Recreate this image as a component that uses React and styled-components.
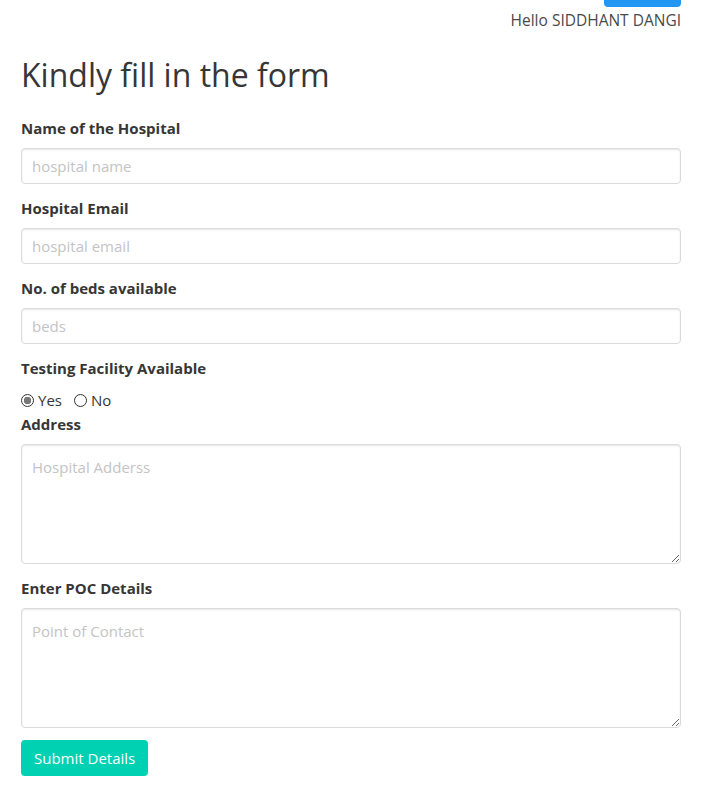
import React from 'react';
import styled, { createGlobalStyle } from 'styled-components';

const GlobalStyle = createGlobalStyle`
  body {
    margin: 0;
    background: #fff;
    font-family: 'Open Sans', 'Noto Sans', sans-serif;
    color: #4a4a4a;
  }
`;

const Page = styled.div`
  padding: 0 38px 0 21px;
`;

const Header = styled.header`
  display: flex;
  flex-direction: column;
  align-items: flex-end;
`;

const LogoutButton = styled.button`
  width: 77px;
  height: 36px;
  margin-top: -29px;
  border: none;
  border-radius: 4px;
  background: #2196f3;
  color: #fff;
`;

const Greeting = styled.div`
  margin-top: 3px;
  font-size: 15.5px;
  line-height: 20px;
  color: #4a4a4a;
`;

const Title = styled.h1`
  margin: 25px 0 21px;
  font-size: 32px;
  line-height: 40px;
  font-weight: 500;
  color: #363636;
`;

const Field = styled.div`
  margin-bottom: ${({ tight }) => (tight ? '0' : '12px')};
`;

const Label = styled.label`
  display: block;
  margin-bottom: 8px;
  font-size: 15px;
  line-height: 24px;
  font-weight: 700;
  color: #363636;
`;

const Input = styled.input`
  display: block;
  box-sizing: border-box;
  width: 100%;
  height: 36px;
  padding: 0 10px;
  border: 1px solid #dbdbdb;
  border-radius: 4px;
  box-shadow: inset 0 1px 2px rgba(10, 10, 10, 0.1);
  font-family: inherit;
  font-size: 15px;
  color: #363636;

  &::placeholder {
    color: #c4c4c4;
  }
`;

const TextArea = styled.textarea`
  display: block;
  box-sizing: border-box;
  width: 100%;
  height: 120px;
  padding: 10px;
  border: 1px solid #dbdbdb;
  border-radius: 4px;
  box-shadow: inset 0 1px 2px rgba(10, 10, 10, 0.1);
  font-family: inherit;
  font-size: 15px;
  line-height: 24px;
  resize: vertical;

  &::placeholder {
    color: #c4c4c4;
  }
`;

const RadioRow = styled.div`
  display: flex;
  align-items: center;
  height: 24px;
  gap: 12px;
`;

const RadioOption = styled.label`
  display: flex;
  align-items: center;
  gap: 4px;
  font-size: 15px;
  color: #363636;
`;

const Radio = styled.input`
  appearance: none;
  box-sizing: border-box;
  margin: 0;
  width: 13px;
  height: 13px;
  border: 1px solid #333;
  border-radius: 50%;
  background: #fff;

  &:checked {
    background: radial-gradient(circle, #777 0 3.5px, #fff 4px);
  }
`;

const SubmitButton = styled.button`
  height: 36px;
  padding: 0 13px;
  border: none;
  border-radius: 4px;
  background: #00d1b2;
  color: #fff;
  font-family: inherit;
  font-size: 15px;
`;

const fields = [
  { label: 'Name of the Hospital', placeholder: 'hospital name' },
  { label: 'Hospital Email', placeholder: 'hospital email' },
  { label: 'No. of beds available', placeholder: 'beds' },
];

export default function App() {
  return (
    <Page>
      <GlobalStyle />
      <Header>
        <LogoutButton />
        <Greeting>Hello SIDDHANT DANGI</Greeting>
      </Header>
      <Title>Kindly fill in the form</Title>
      <form onSubmit={(e) => e.preventDefault()}>
        {fields.map((f) => (
          <Field key={f.label}>
            <Label>{f.label}</Label>
            <Input placeholder={f.placeholder} />
          </Field>
        ))}
        <Field tight>
          <Label>Testing Facility Available</Label>
          <RadioRow>
            <RadioOption>
              <Radio type="radio" name="testing" defaultChecked /> Yes
            </RadioOption>
            <RadioOption>
              <Radio type="radio" name="testing" /> No
            </RadioOption>
          </RadioRow>
        </Field>
        <Field>
          <Label>Address</Label>
          <TextArea placeholder="Hospital Adderss" />
        </Field>
        <Field>
          <Label>Enter POC Details</Label>
          <TextArea placeholder="Point of Contact" />
        </Field>
        <SubmitButton type="submit">Submit Details</SubmitButton>
      </form>
    </Page>
  );
}
